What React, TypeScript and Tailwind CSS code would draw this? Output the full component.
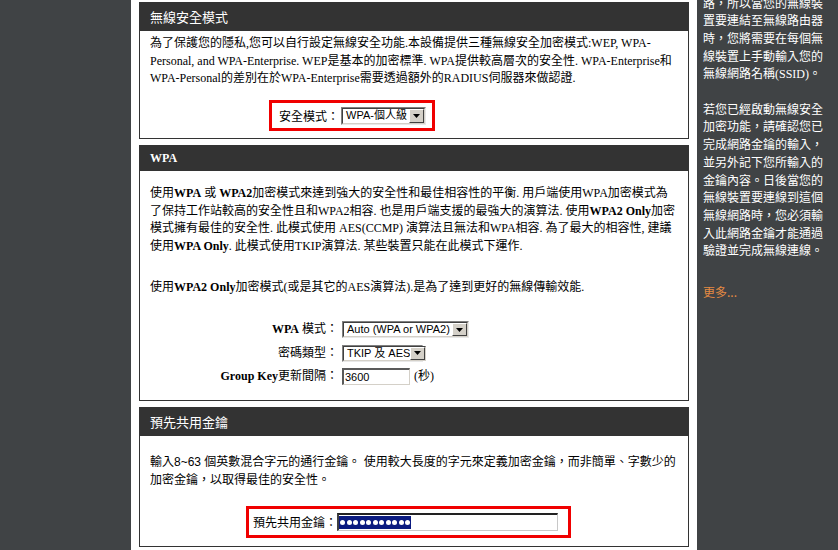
import type { ReactNode } from "react";

const SERIF = "font-[family-name:'Liberation_Serif','Noto_Sans_CJK_TC',serif]";
const SANS = "font-[family-name:'Liberation_Sans','Noto_Sans_CJK_TC',sans-serif]";
const CJK = "font-[family-name:'Noto_Sans_CJK_TC','Liberation_Sans',sans-serif]";

function Panel({
  title,
  headerClass,
  children,
}: {
  title: ReactNode;
  headerClass: string;
  children: ReactNode;
}) {
  return (
    <div className="border-x border-b border-[#333333] bg-white">
      <div className={`flex items-center bg-[#333333] pl-[10px] text-white ${headerClass}`}>{title}</div>
      {children}
    </div>
  );
}

function Arrow() {
  return (
    <div className="flex w-[15px] shrink-0 items-center justify-center border border-t-[#ffffff] border-l-[#ffffff] border-r-[#404040] border-b-[#404040] bg-[#d4d0c8]">
      <svg width="7" height="4" viewBox="0 0 7 4">
        <polygon points="0,0 7,0 3.5,4" fill="#000" />
      </svg>
    </div>
  );
}

function Select({ value, className }: { value: string; className: string }) {
  return (
    <div
      className={`flex shrink-0 border border-t-[#808080] border-l-[#808080] border-r-[#e8e8e8] border-b-[#e8e8e8] ${className}`}
    >
      <div className="flex flex-1 border border-t-[#404040] border-l-[#404040] border-r-[#d4d0c8] border-b-[#d4d0c8] bg-white">
        <div className={`flex flex-1 items-center overflow-hidden whitespace-nowrap pl-[3px] text-[11px] text-black ${SANS}`}>
          {value}
        </div>
        <Arrow />
      </div>
    </div>
  );
}

function FormRow({ label, children }: { label: ReactNode; children: ReactNode }) {
  return (
    <div className="flex h-[23.5px] items-center">
      <div className={`w-[188px] shrink-0 whitespace-nowrap text-right text-[12px] text-black ${SERIF}`}>{label}</div>
      <div className="ml-[4px] flex items-center">{children}</div>
    </div>
  );
}

export default function App() {
  return (
    <div className="flex h-[550px] w-[838px] overflow-hidden bg-white">
      <div className="w-[131px] shrink-0 bg-[#404345]" />

      <div className="flex w-[566px] shrink-0 flex-col gap-[6px] px-[8px] pt-[2px]">
        <Panel
          headerClass="h-[29px]"
          title={<span className={`text-[13px] ${CJK}`}>無線安全模式</span>}
        >
          <div className={`pl-[10px] pt-[4px] pb-[7px] text-[12px] leading-[17.5px] text-black ${SERIF}`}>
            <div className="whitespace-nowrap">
              為了保護您的隱私,您可以自行設定無線安全功能.本設備提供三種無線安全加密模式:WEP, WPA-
            </div>
            <div className="whitespace-nowrap">
              Personal, and WPA-Enterprise. WEP是基本的加密標準. WPA提供較高層次的安全性. WPA-Enterprise和
            </div>
            <div className="whitespace-nowrap">
              WPA-Personal的差別在於WPA-Enterprise需要透過額外的RADIUS伺服器來做認證.
            </div>
            <div className="ml-[119px] mt-[12.5px] flex h-[31px] w-[166px] items-center border-[3px] border-[#f00000] pl-[7px]">
              <span className={`w-[60px] shrink-0 text-[12px] ${CJK}`}>安全模式：</span>
              <Select value="WPA-個人級" className="ml-[2px] h-[18px] w-[85px]" />
            </div>
          </div>
        </Panel>

        <Panel
          headerClass="h-[26px]"
          title={<span className={`text-[12px] font-bold ${SERIF}`}>WPA</span>}
        >
          <div className={`pl-[10px] pt-[14px] pb-[11.3px] text-[12px] leading-[17.7px] text-black ${SERIF}`}>
            <div className="whitespace-nowrap">
              使用<b>WPA</b> 或 <b>WPA2</b>加密模式來達到強大的安全性和最佳相容性的平衡. 用戶端使用WPA加密模式為
            </div>
            <div className="whitespace-nowrap">
              了保持工作站較高的安全性且和WPA2相容. 也是用戶端支援的最強大的演算法. 使用<b>WPA2 Only</b>加密
            </div>
            <div className="whitespace-nowrap">
              模式擁有最佳的安全性. 此模式使用 AES(CCMP) 演算法且無法和WPA相容. 為了最大的相容性, 建議
            </div>
            <div className="whitespace-nowrap">
              使用<b>WPA Only</b>. 此模式使用TKIP演算法. 某些裝置只能在此模式下運作.
            </div>
            <div className="mt-[22.7px] whitespace-nowrap">
              使用<b>WPA2 Only</b>加密模式(或是其它的AES演算法).是為了達到更好的無線傳輸效能.
            </div>

            <div className="mt-[22px]">
              <FormRow
                label={
                  <>
                    <b>WPA</b> 模式：
                  </>
                }
              >
                <Select value="Auto (WPA or WPA2)" className="h-[17px] w-[127px]" />
              </FormRow>
              <FormRow label="密碼類型：">
                <Select value="TKIP 及 AES" className="h-[17px] w-[81px]" />
              </FormRow>
              <FormRow
                label={
                  <>
                    <b>Group Key</b>更新間隔：
                  </>
                }
              >
                <div className="flex h-[17px] w-[68px] items-center border-t-2 border-l-2 border-r border-b border-t-[#5a5a5a] border-l-[#5a5a5a] border-r-[#d4d0c8] border-b-[#d4d0c8] bg-white">
                  <span className={`pl-[1px] text-[11px] text-black ${SANS}`}>3600</span>
                </div>
                <span className={`ml-[4px] text-[12px] text-black ${SERIF}`}>(秒)</span>
              </FormRow>
            </div>
          </div>
        </Panel>

        <Panel
          headerClass="h-[29px]"
          title={<span className={`text-[13px] ${CJK}`}>預先共用金鑰</span>}
        >
          <div className={`pl-[10px] pt-[18px] pb-[8px] text-[12px] leading-[17.7px] text-black ${SANS}`}>
            <div className="whitespace-nowrap">
              輸入8~63 個英數混合字元的通行金鑰。 使用較大長度的字元來定義加密金鑰，而非簡單、字數少的
            </div>
            <div className="whitespace-nowrap">加密金鑰，以取得最佳的安全性。</div>
            <div className="ml-[96px] mt-[16.6px] flex h-[32px] w-[325px] items-center border-[3px] border-[#f00000] pl-[4px]">
              <span className={`w-[84px] shrink-0 text-[12px] ${CJK}`}>預先共用金鑰：</span>
              <div className="flex h-[18px] w-[221px] items-center border-t-2 border-l-2 border-r border-b border-t-[#222222] border-l-[#404040] border-r-[#c8c8c8] border-b-[#c8c8c8] bg-white">
                <div className="flex h-[13px] items-center gap-[1.5px] bg-[#0a1a80] px-[1px]">
                  {Array.from({ length: 11 }).map((_, i) => (
                    <span key={i} className="h-[5px] w-[5px] rounded-full bg-white" />
                  ))}
                </div>
              </div>
            </div>
          </div>
        </Panel>
      </div>

      <div className={`w-[141px] shrink-0 bg-[#404345] pl-[6px] text-[12px] leading-[17.7px] text-white ${SERIF}`}>
        <div className="-mt-[4.5px] whitespace-nowrap">
          路，所以當您的無線裝
          <br />
          置要連結至無線路由器
          <br />
          時，您將需要在每個無
          <br />
          線裝置上手動輸入您的
          <br />
          無線網路名稱(SSID)。
          <br />
          <br />
          若您已經啟動無線安全
          <br />
          加密功能，請確認您已
          <br />
          完成網路金鑰的輸入，
          <br />
          並另外記下您所輸入的
          <br />
          金鑰內容。日後當您的
          <br />
          無線裝置要連線到這個
          <br />
          無線網路時，您必須輸
          <br />
          入此網路金鑰才能通過
          <br />
          驗證並完成無線連線。
        </div>
        <div className={`mt-[21.8px] text-[#e48a43] ${CJK}`}>更多...</div>
      </div>
    </div>
  );
}
